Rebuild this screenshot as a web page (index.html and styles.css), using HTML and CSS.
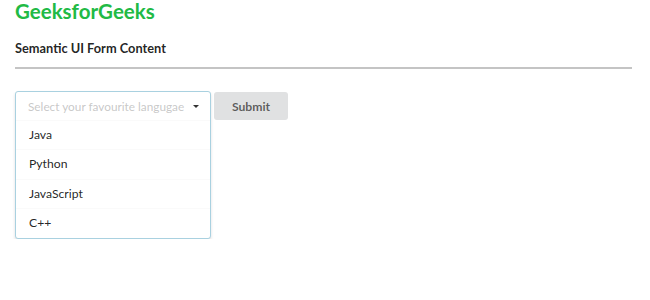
FILE: index.html
```html
<!DOCTYPE html>
<html lang="en">
<head>
    <meta charset="UTF-8">
    <meta name="viewport" content="width=device-width, initial-scale=1.0">
    <title>Semantic UI Form Content</title>
    <link rel="stylesheet" href="styles.css">
</head>
<body>
    <div class="container">
        <h2 class="brand">GeeksforGeeks</h2>
        <h4 class="subtitle">Semantic UI Form Content</h4>
        <hr class="divider">
        <form class="form">
            <div class="dropdown">
                <div class="dropdown-text">
                    <span class="placeholder">Select your favourite langugae</span>
                    <span class="caret"></span>
                </div>
                <div class="menu">
                    <div class="item">Java</div>
                    <div class="item">Python</div>
                    <div class="item">JavaScript</div>
                    <div class="item">C++</div>
                </div>
            </div>
            <button type="button" class="btn">Submit</button>
        </form>
    </div>
</body>
</html>
```

FILE: styles.css
```css
body {
    font-family: Lato, "Helvetica Neue", Arial, sans-serif;
    font-size: 12.2px;
    color: rgba(0, 0, 0, 0.87);
    background-color: #fff;
    margin: 0;
}
.container {
    padding: 1px 18px 0 15px;
}
.brand {
    color: #21ba45;
    font-size: 20.5px;
    font-weight: 700;
    line-height: 20px;
    margin: 0;
}
.subtitle {
    font-size: 12.8px;
    font-weight: 700;
    line-height: 16px;
    margin: 19px 0 0;
}
.divider {
    border: none;
    border-top: 2px solid #c4c4c4;
    margin: 11px 0 0;
}
.form {
    display: flex;
    align-items: flex-start;
    gap: 3px;
    margin-top: 22px;
}
.dropdown {
    width: 194px;
    border: 1px solid #a9d1e0;
    border-radius: 3px;
    box-shadow: 0 2px 3px 0 rgba(34, 36, 38, 0.15);
    background-color: #fff;
}
.dropdown-text {
    display: flex;
    align-items: center;
    justify-content: space-between;
    height: 28px;
    padding: 0 11px 0 12px;
}
.placeholder {
    font-size: 11.8px;
    color: rgba(191, 191, 191, 0.87);
}
.caret {
    width: 0;
    height: 0;
    border-left: 3.5px solid transparent;
    border-right: 3.5px solid transparent;
    border-top: 3.5px solid rgba(0, 0, 0, 0.8);
}
.menu {
    border-top: 1px solid #fafafa;
}
.item {
    height: 28.4px;
    line-height: 28.4px;
    padding-left: 13px;
    border-top: 1px solid #fafafa;
}
.item:first-child {
    border-top: none;
}
.btn {
    font-family: inherit;
    font-size: 12.2px;
    font-weight: 700;
    color: rgba(0, 0, 0, 0.6);
    background-color: #e0e1e2;
    border: none;
    border-radius: 3px;
    width: 74px;
    height: 28px;
    margin-top: 1px;
    cursor: pointer;
}
```
